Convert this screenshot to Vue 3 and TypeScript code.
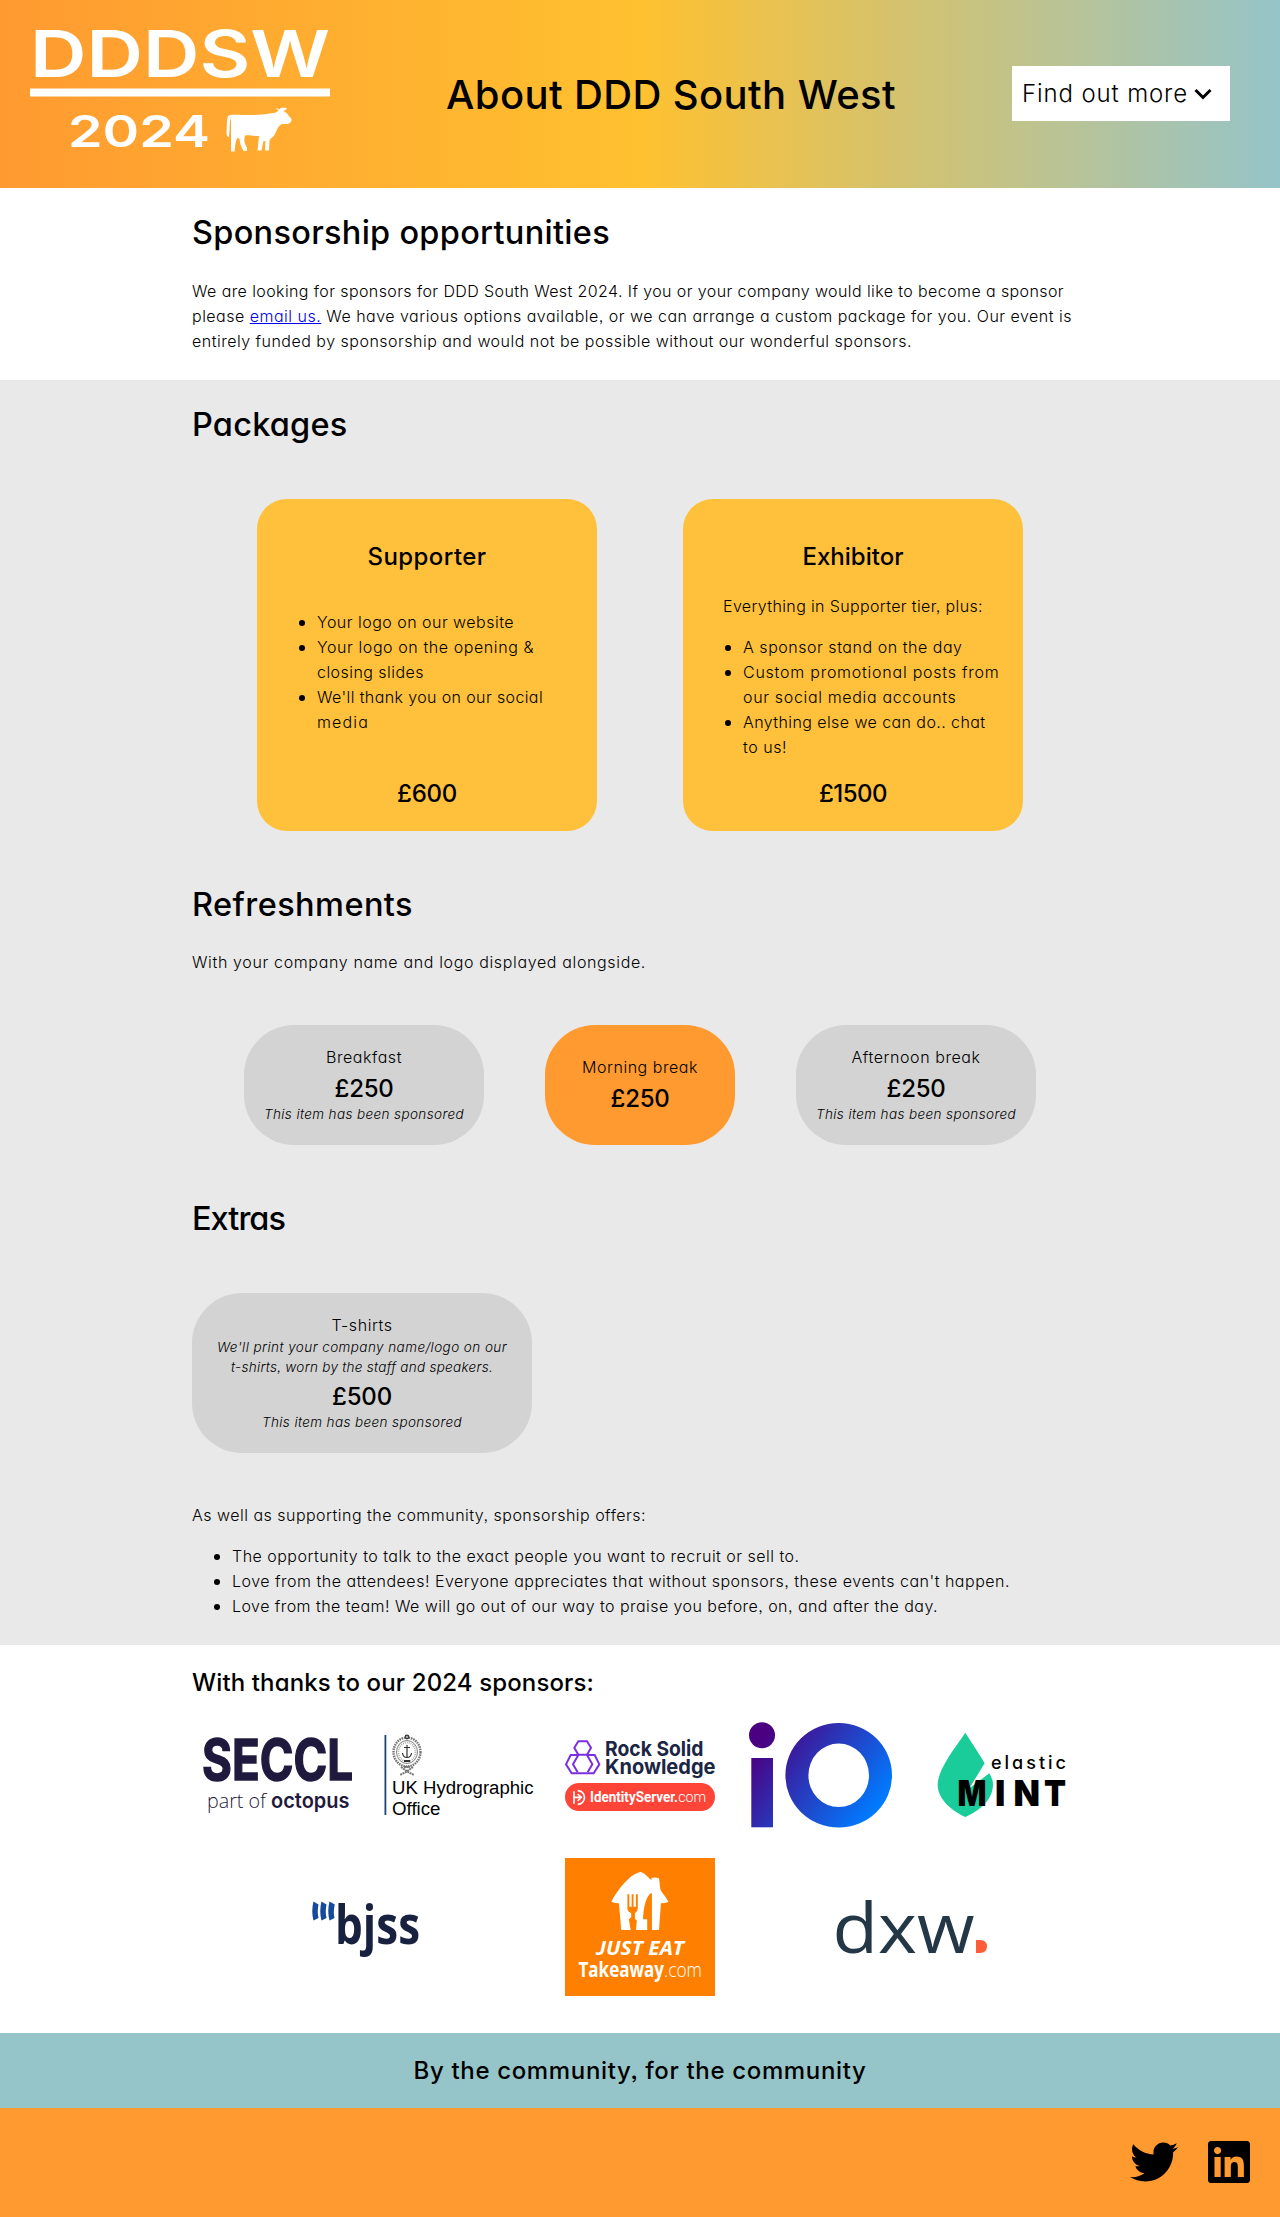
<script setup lang="ts">
import type { Directive } from 'vue'

interface Line {
  text: string
  width: number
  bullet?: boolean
}
interface Tier {
  name: Line
  intro?: Line
  items: Line[]
  price: Line
}
interface Extra {
  name: Line
  notes?: Line[]
  price: Line
  sponsored: boolean
}

// Tracks a line of text out (or in) until it fills its measure.
const vFit: Directive<HTMLElement, number> = {
  mounted(el, { value }) {
    const natural = el.getBoundingClientRect().width
    const count = (el.textContent ?? '').length
    if (count > 0) el.style.letterSpacing = `${(value - natural) / count}px`
  },
}

const tiers: Tier[] = [
  {
    name: { text: 'Supporter', width: 119 },
    items: [
      { text: 'Your logo on our website', width: 197, bullet: true },
      { text: 'Your logo on the opening &', width: 217, bullet: true },
      { text: 'closing slides', width: 107 },
      { text: "We'll thank you on our social", width: 226, bullet: true },
      { text: 'media', width: 52 },
    ],
    price: { text: '£600', width: 60 },
  },
  {
    name: { text: 'Exhibitor', width: 101 },
    intro: { text: 'Everything in Supporter tier, plus:', width: 260 },
    items: [
      { text: 'A sponsor stand on the day', width: 219.5, bullet: true },
      { text: 'Custom promotional posts from', width: 256.5, bullet: true },
      { text: 'our social media accounts', width: 213.5 },
      { text: 'Anything else we can do.. chat', width: 242.5, bullet: true },
      { text: 'to us!', width: 44 },
    ],
    price: { text: '£1500', width: 68 },
  },
]

const refreshments: Extra[] = [
  { name: { text: 'Breakfast', width: 76 }, price: { text: '£250', width: 59 }, sponsored: true },
  { name: { text: 'Morning break', width: 116 }, price: { text: '£250', width: 59 }, sponsored: false },
  { name: { text: 'Afternoon break', width: 129 }, price: { text: '£250', width: 59 }, sponsored: true },
]

const extras: Extra[] = [
  {
    name: { text: 'T-shirts', width: 61 },
    notes: [
      { text: "We'll print your company name/logo on our", width: 290 },
      { text: 't-shirts, worn by the staff and speakers.', width: 262 },
    ],
    price: { text: '£500', width: 60 },
    sponsored: true,
  },
]

const offers: Line[] = [
  { text: 'The opportunity to talk to the exact people you want to recruit or sell to.', width: 567.5, bullet: true },
  { text: "Love from the attendees! Everyone appreciates that without sponsors, these events can't happen.", width: 778, bullet: true },
  { text: 'Love from the team! We will go out of our way to praise you before, on, and after the day.', width: 706, bullet: true },
]
</script>

<template>
  <div class="page">
    <header class="top">
      <svg class="brand" width="300" height="132" viewBox="0 0 300 132" fill="#fff">
        <text x="0" y="50.500" font-size="64" font-weight="600" textLength="300" lengthAdjust="spacingAndGlyphs">DDDSW</text>
        <rect x="0" y="62.500" width="300" height="8" />
        <text x="38" y="120.500" font-size="43.500" font-weight="600" textLength="142" lengthAdjust="spacingAndGlyphs">2024</text>
        <path
          d="M198 90 C200 88.500 204 88.700 208 88.800 C222 89.500 232 89 240 87.500 L246 86.500 L248.500 84.500 L245.500 82 L249.500 83.200 C250.500 82 252 81.500 257 82 C256.500 84 254.500 84.500 253.500 85 L256.500 87 L261.500 93 C262 95 260.500 97 258 98 L252 98 C248 100 247 104 245 108 C243 112 240 112.500 239.500 114.500 L239 124.500 H235 L235.500 115 L233.500 115 L231.500 124.500 H227.500 L229 110 C222 110 219 109 215 109.500 C213.500 114 215 119 217 121.500 V125 H213.500 C211 121 209.500 116 209.500 112.500 L207.500 112 C205 116 205.500 120 204.500 125.500 H201 V92 C199.500 94 200 103 199 111 C198 111.500 196.500 110 196.500 107 C197 102 196.500 94 198 90 Z"
        />
      </svg>
      <h1><span v-fit="450">About DDD South West</span></h1>
      <button class="menu" type="button">
        <span v-fit="166">Find out more</span>
        <svg width="18" height="12" viewBox="0 0 18 12" fill="none" stroke="#000" stroke-width="3"><path d="M1.500 2 L9 9.500 L16.500 2" /></svg>
      </button>
    </header>

    <section class="band">
      <h2><span v-fit="418">Sponsorship opportunities</span></h2>
      <p>
        <span v-fit="872">We are looking for sponsors for DDD South West 2024. If you or your company would like to become a sponsor</span><br />
        <span v-fit="880">please <a href="#">email us.</a> We have various options available, or we can arrange a custom package for you. Our event is</span><br />
        <span v-fit="720">entirely funded by sponsorship and would not be possible without our wonderful sponsors.</span>
      </p>
    </section>

    <section class="band grey">
      <h2><span v-fit="155.500">Packages</span></h2>
      <div class="tiers">
        <article v-for="tier in tiers" :key="tier.name.text" class="tier">
          <h3><span v-fit="tier.name.width">{{ tier.name.text }}</span></h3>
          <p v-if="tier.intro" class="intro"><span v-fit="tier.intro.width">{{ tier.intro.text }}</span></p>
          <ul :class="{ alone: !tier.intro }">
            <li v-for="item in tier.items" :key="item.text" :class="{ dot: item.bullet }">
              <span v-fit="item.width">{{ item.text }}</span>
            </li>
          </ul>
          <div class="price"><span v-fit="tier.price.width">{{ tier.price.text }}</span></div>
        </article>
      </div>

      <h2><span v-fit="221">Refreshments</span></h2>
      <p><span v-fit="454">With your company name and logo displayed alongside.</span></p>
      <div class="pills">
        <article v-for="item in refreshments" :key="item.name.text" class="pill" :class="{ open: !item.sponsored }">
          <div class="name"><span v-fit="item.name.width">{{ item.name.text }}</span></div>
          <div class="cost"><span v-fit="item.price.width">{{ item.price.text }}</span></div>
          <div v-if="item.sponsored" class="note"><span v-fit="200">This item has been sponsored</span></div>
        </article>
      </div>

      <h2><span v-fit="93">Extras</span></h2>
      <div class="extras">
        <article v-for="item in extras" :key="item.name.text" class="pill large">
          <div class="name"><span v-fit="item.name.width">{{ item.name.text }}</span></div>
          <div v-for="note in item.notes" :key="note.text" class="note"><span v-fit="note.width">{{ note.text }}</span></div>
          <div class="cost"><span v-fit="item.price.width">{{ item.price.text }}</span></div>
          <div v-if="item.sponsored" class="note"><span v-fit="200">This item has been sponsored</span></div>
        </article>
      </div>

      <p class="after"><span v-fit="454">As well as supporting the community, sponsorship offers:</span></p>
      <ul class="offers">
        <li v-for="offer in offers" :key="offer.text" class="dot"><span v-fit="offer.width">{{ offer.text }}</span></li>
      </ul>
    </section>

    <section class="sponsors">
      <h3><span v-fit="402">With thanks to our 2024 sponsors:</span></h3>
      <div class="logos first">
        <svg width="150" height="110" viewBox="0 0 150 110" fill="#1f1a3d">
          <text x="-1" y="58.500" font-size="56.500" font-weight="700" stroke="#1f1a3d" stroke-width="1.500" textLength="151" lengthAdjust="spacingAndGlyphs">SECCL</text>
          <text class="open-sans" x="4" y="86.500" font-size="20" font-weight="300" textLength="59" lengthAdjust="spacingAndGlyphs">part of</text>
          <text x="68" y="86.500" font-size="20.500" font-weight="600" textLength="78.500" lengthAdjust="spacingAndGlyphs">octopus</text>
        </svg>

        <svg width="150" height="110" viewBox="0 0 150 110">
          <rect x="0.500" y="14" width="1.800" height="80" fill="#1d4470" />
          <g fill="none" stroke="#333">
            <ellipse cx="23" cy="31" rx="13.500" ry="14.500" stroke-width="2.400" stroke-dasharray="1.600 .8" stroke="#777" />
            <ellipse cx="23" cy="31" rx="10.500" ry="11.500" stroke-width=".6" />
            <ellipse cx="23" cy="31" rx="8.500" ry="9.500" stroke-width="1.800" stroke-dasharray=".8 1.200" stroke="#999" />
            <path d="M23 24 V36 M20 26.500 H26 M18.500 32 Q19 36.500 23 36.500 Q27 36.500 27.500 32" stroke-width="1.200" />
            <circle cx="23" cy="16" r="1.800" stroke-width="1.200" />
            <path d="M17 46 L24 51 L30 54 M29 46 L22 51 L16 54 M20 46 L26 46" stroke-width="2" stroke-dasharray="2 .6" stroke="#777" />
            <path d="M20 40 H26" stroke-width="2" />
          </g>
          <g class="liberation" font-size="18">
            <text x="8" y="73" textLength="141.500" lengthAdjust="spacingAndGlyphs">UK Hydrographic</text>
            <text x="8" y="93.700" textLength="48.500" lengthAdjust="spacingAndGlyphs">Office</text>
          </g>
        </svg>

        <svg width="150" height="110" viewBox="0 0 150 110">
          <g transform="translate(-25 -21) scale(.33333)" fill="none" stroke="#7b2fe0" stroke-width="6">
            <path d="M103 143 L115 124 H141 L153 143 L141 164 H115 Z" />
            <path d="M115 165 H92 L78 193 L95 220 H161 L178 193 L164 165 H141" />
            <path d="M115 165 L99 193 L113 217 M141 165 L157 193 L143 217" />
          </g>
          <g fill="#1b2645" font-size="20.500" font-weight="650">
            <text x="40" y="34.700" textLength="98.500" lengthAdjust="spacingAndGlyphs">Rock Solid</text>
            <text x="40" y="52.700" textLength="110.500" lengthAdjust="spacingAndGlyphs">Knowledge</text>
          </g>
          <rect y="62" width="150" height="28" rx="14" fill="#ff4438" />
          <g transform="translate(-25 -21) scale(.33333)" fill="none" stroke="#fff" stroke-width="5">
            <path d="M113 272 A20 20 0 0 1 113 313 M102 274 V311 M102 292 H124 M113 282 L124 292 L113 303" />
          </g>
          <g class="roboto" fill="#fff" font-size="14">
            <text x="25" y="80.700" font-weight="700" textLength="88" lengthAdjust="spacingAndGlyphs">IdentityServer.</text>
            <text x="113.200" y="80.700" font-weight="300" textLength="28" lengthAdjust="spacingAndGlyphs">com</text>
          </g>
        </svg>

        <svg width="150" height="110" viewBox="0 0 150 110">
          <defs>
            <linearGradient id="io-fill" gradientUnits="userSpaceOnUse" x1="20" y1="15" x2="125" y2="95">
              <stop offset="0" stop-color="#4b0082" />
              <stop offset="1" stop-color="#007bff" />
            </linearGradient>
          </defs>
          <g fill="url(#io-fill)">
            <circle cx="16" cy="14.300" r="13" />
            <rect x="5.300" y="37" width="21.700" height="69.300" />
            <path fill-rule="evenodd" d="M92.700 2 A53.300 52.300 0 0 1 92.700 106.600 A53.300 52.300 0 0 1 92.700 2 Z M92.700 22.500 A30.300 31.800 0 0 0 92.700 86.100 A30.300 31.800 0 0 0 92.700 22.500 Z" />
          </g>
        </svg>

        <svg width="150" height="110" viewBox="0 0 150 110">
          <path
            transform="translate(-27 -21) scale(.33333)"
            fill="#1bcc9b"
            d="M196 98 C160 150 113 210 113 255 C113 300 160 335 196 351 C232 335 279 305 279 252 C279 242 274 230 268 220 L208 265 L254 190 C238 162 215 128 196 98 Z"
          />
          <text x="64" y="48" font-size="18" font-weight="450" textLength="75">elastic</text>
          <text y="84.700" font-size="35.500" font-weight="900"><tspan x="30.500" textLength="29" lengthAdjust="spacingAndGlyphs">M</tspan><tspan x="68">I</tspan><tspan x="86.500" textLength="26.500" lengthAdjust="spacingAndGlyphs">N</tspan><tspan x="117" textLength="22" lengthAdjust="spacingAndGlyphs">T</tspan></text>
        </svg>
      </div>

      <div class="logos second">
        <svg width="150" height="138" viewBox="0 0 150 138">
          <g fill="#164a9c">
            <path d="M20.500 43.500 L25.500 46.500 Q24 54 25.500 60 L20.500 62.500 Q18 53 20.500 43.500 Z" />
            <path d="M28.500 43.500 L33.500 46.500 Q32 54 33.500 60 L28.500 62.500 Q26 53 28.500 43.500 Z" />
            <path d="M36.500 43.500 L41.800 46.500 Q40 54 41.500 60 L36.500 62.500 Q34 53 36.500 43.500 Z" />
          </g>
          <text class="open-sans" x="42" y="86" font-size="54" font-weight="700" fill="#18213f" textLength="85" lengthAdjust="spacingAndGlyphs">bjss</text>
        </svg>

        <svg width="150" height="138" viewBox="0 0 150 138">
          <rect width="150" height="138" fill="#ff8000" />
          <g transform="translate(-275 -18) scale(.4719 .33333)">
            <path fill="#fff" d="M742 96 C750 97 758 110 766 121 V114 Q774 111 782 115 L785 150 C792 164 799 176 802 186 Q794 190 786 190 L782 270 H702 L697 190 Q689 190 681 185 C692 155 718 104 742 96 Z" />
            <path fill="#ff8000" d="M767 158 C755 165 749 200 748 238 H757 V271 H767 Z" />
            <path fill="#ff8000" d="M715 163 H719 V200 H724 V163 H728 V200 H733 V163 H737 V205 Q737 215 731 220 V236 L735 242 L733 271 H722 L718 238 L723 232 V220 Q715 215 715 205 Z" />
          </g>
          <g class="open-sans" fill="#fff">
            <text x="31" y="97.300" font-size="20" font-weight="700" font-style="italic" textLength="88" lengthAdjust="spacingAndGlyphs">JUST EAT</text>
            <text x="13.500" y="119" font-size="20.500" font-weight="700" textLength="85.500" lengthAdjust="spacingAndGlyphs">Takeaway</text>
            <text x="99" y="119" font-size="20.500" font-weight="300" textLength="38" lengthAdjust="spacingAndGlyphs">.com</text>
          </g>
        </svg>

        <svg width="150" height="138" viewBox="0 0 150 138">
          <text class="open-sans" x="-4.500" y="95" font-size="69" font-weight="450" fill="#233746" textLength="142" lengthAdjust="spacingAndGlyphs">dxw</text>
          <path d="M139 82 H143 Q150 82 150 88.500 Q150 95 143 95 H139 Z" fill="#ff5c39" />
        </svg>
      </div>
    </section>

    <div class="motto"><span v-fit="453">By the community, for the community</span></div>
    <footer>
      <a href="#" aria-label="Twitter">
        <svg width="48" height="48" viewBox="0 0 512 512"><path d="M459.370 151.716c.325 4.548.325 9.097.325 13.645 0 138.720-105.583 298.558-298.558 298.558-59.452 0-114.680-17.219-161.137-47.106 8.447.974 16.568 1.299 25.340 1.299 49.055 0 94.213-16.568 130.274-44.832-46.132-.975-84.792-31.188-98.112-72.772 6.498.974 12.995 1.624 19.818 1.624 9.421 0 18.843-1.300 27.614-3.573-48.081-9.747-84.143-51.980-84.143-102.985v-1.299c13.969 7.797 30.214 12.670 47.431 13.319-28.264-18.843-46.781-51.005-46.781-87.391 0-19.492 5.197-37.360 14.294-52.954 51.655 63.675 129.300 105.258 216.365 109.807-1.624-7.797-2.599-15.918-2.599-24.040 0-57.828 46.782-104.934 104.934-104.934 30.213 0 57.502 12.670 76.670 33.137 23.715-4.548 46.456-13.320 66.599-25.340-7.798 24.366-24.366 44.833-46.132 57.827 21.117-2.273 41.584-8.122 60.426-16.243-14.292 20.791-32.161 39.308-52.628 54.253z" /></svg>
      </a>
      <a href="#" aria-label="LinkedIn">
        <svg width="42" height="48" viewBox="0 0 448 512"><path d="M416 32H31.900C14.300 32 0 46.500 0 64.300v383.400C0 465.500 14.300 480 31.900 480H416c17.600 0 32-14.500 32-32.300V64.300c0-17.800-14.400-32.300-32-32.300zM135.400 416H69V202.200h66.500V416zm-33.200-243c-21.300 0-38.500-17.300-38.500-38.500S80.900 96 102.200 96c21.200 0 38.500 17.300 38.500 38.500 0 21.300-17.200 38.500-38.500 38.500zm282.100 243h-66.400V312c0-24.800-.5-56.700-34.500-56.700-34.600 0-39.900 27-39.900 54.900V416h-66.400V202.200h63.700v29.200h.9c8.900-16.800 30.600-34.500 62.200-34.500 66.500 0 78.900 43.800 78.900 100.900V416z" /></svg>
      </a>
    </footer>
  </div>
</template>

<style>
body {
  margin: 0;
  background: #fff;
}
</style>

<style scoped>
.page {
  width: 1280px;
  font-family: Inter, 'Open Sans', sans-serif;
  font-feature-settings: 'cv11' 1, 'ss03' 1;
  font-size: 16px;
  font-weight: 330;
  line-height: 25px;
  color: #000;
}
h1, h2, h3, p, ul {
  margin: 0;
  padding: 0;
  font-weight: 330;
}
span {
  display: inline-block;
  white-space: nowrap;
}
svg {
  display: block;
  overflow: visible;
}
.open-sans { font-family: 'Open Sans', sans-serif; }
.liberation { font-family: 'Liberation Sans', sans-serif; }
.roboto { font-family: Roboto, sans-serif; }

.top {
  display: flex;
  align-items: center;
  height: 188px;
  box-sizing: border-box;
  padding-left: 30px;
  background: linear-gradient(to right, #ff9a30, #ffc130 50%, #95c4c9);
}
.brand { margin-top: -4px; }
h1 {
  width: 451px;
  margin: 1px 0 0 116px;
  font-size: 40px;
  font-weight: 550;
  line-height: 60px;
}
.menu {
  display: flex;
  align-items: center;
  gap: 6px;
  width: 218px;
  height: 55px;
  margin: 0 0 1px 115px;
  padding: 0 0 0 10px;
  border: 0;
  background: #fff;
  font: inherit;
  font-size: 24px;
  color: #000;
}

.band { padding: 0 192px 26px; }
.grey { background: #e9e9e9; }
h2 {
  padding-top: 21px;
  font-size: 32.5px;
  font-weight: 550;
  line-height: 48px;
}
h3 {
  font-size: 24px;
  font-weight: 550;
  line-height: 36px;
}
h2 + p { margin-top: 22px; }
a { color: #0000ee; }
ul { list-style: none; }
.dot { position: relative; }
.dot::before {
  content: '';
  position: absolute;
  left: -18px;
  top: 10px;
  width: 6px;
  height: 6px;
  border-radius: 50%;
  background: #000;
}

.tiers {
  display: flex;
  gap: 86px;
  padding: 50px 0 29px 65px;
}
.tier {
  display: flex;
  flex-direction: column;
  width: 340px;
  height: 332px;
  box-sizing: border-box;
  padding: 40px 20px 19px;
  border-radius: 30px;
  background: #ffc13b;
}
.tier h3 { text-align: center; }
.tier ul { margin: 16px 0 0 40px; }
.tier ul.alone { margin-top: 35px; }
.intro { margin: 19px 0 0 20px; }
.price {
  margin-top: auto;
  text-align: center;
  font-size: 24px;
  font-weight: 550;
  line-height: 36px;
}

.grey h2 + p { margin-top: 21px; }
.pills {
  display: flex;
  gap: 61px;
  padding: 50px 0 29px 52px;
}
.pill {
  display: flex;
  flex-direction: column;
  justify-content: center;
  width: 240px;
  height: 120px;
  border-radius: 50px;
  background: #d3d3d3;
  text-align: center;
}
.pill.open {
  width: 190px;
  background: #ff9a30;
}
.pill.large {
  width: 340px;
  height: 160px;
}
.name { line-height: 25px; }
.cost {
  margin-bottom: -2px;
  font-size: 24px;
  font-weight: 550;
  line-height: 37px;
}
.note {
  margin: -1px 0 1px;
  font-size: 13.5px;
  font-style: italic;
  line-height: 20px;
}
.extras { padding: 50px 0; }
.offers {
  margin: 16px 0 0 40px;
}

.sponsors {
  height: 388px;
  box-sizing: border-box;
  padding: 20px 192px 0;
}
.logos { display: flex; }
.first {
  gap: 31px;
  padding: 20px 0 0 11px;
}
.second {
  gap: 122px;
  padding: 27px 0 0 101px;
}

.motto {
  height: 75px;
  background: #96c5c9;
  text-align: center;
  font-size: 24px;
  font-weight: 550;
  line-height: 76px;
}
footer {
  display: flex;
  justify-content: flex-end;
  align-items: flex-start;
  gap: 30px;
  height: 109px;
  box-sizing: border-box;
  padding: 30px 30px 0 0;
  background: #ff9a30;
}
footer a { color: #000; }
</style>
